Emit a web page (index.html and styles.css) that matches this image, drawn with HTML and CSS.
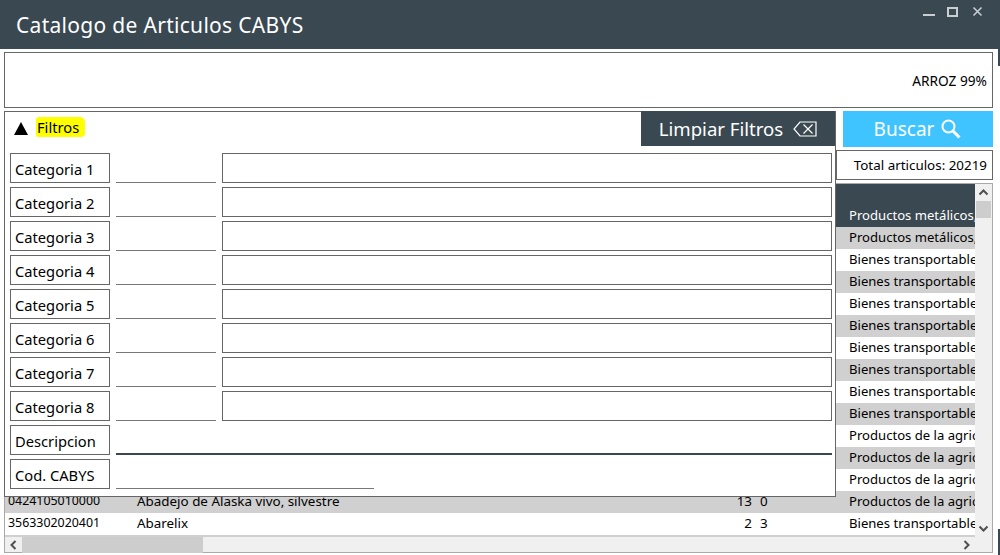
FILE: index.html
```html
<!DOCTYPE html>
<html lang="es">
<head>
    <meta charset="UTF-8">
    <title>Catalogo de Articulos CABYS</title>
    <link rel="stylesheet" href="styles.css">
</head>
<body>
    <header class="title-bar">
        <h1>Catalogo de Articulos CABYS</h1>
        <div class="window-buttons">
            <svg width="64" height="14" viewBox="0 0 64 14">
                <path d="M0 10h12" stroke="#c8ced2" stroke-width="2" fill="none"/>
                <rect x="25" y="3" width="9" height="8" stroke="#c8ced2" stroke-width="2" fill="none"/>
                <path d="M50.5 2.5l8 8M58.5 2.5l-8 8" stroke="#c8ced2" stroke-width="1.6" fill="none"/>
            </svg>
        </div>
    </header>

    <div class="search-box">ARROZ 99%</div>

    <main class="content">
        <div class="side-actions">
            <button class="search-button">Buscar
                <svg width="22" height="22" viewBox="0 0 22 22">
                    <circle cx="8.5" cy="8.5" r="6" stroke="#fff" stroke-width="2" fill="none"/>
                    <path d="M13 13l6.5 6.5" stroke="#fff" stroke-width="3" fill="none"/>
                </svg>
            </button>
            <div class="total-box">Total articulos: 20219</div>
        </div>

        <section class="grid">
            <div class="grid-body">
                <div class="grid-rows">
                    <div class="row row-head"></div>
                    <div class="row row-selected"><span class="c-code"></span><span class="c-desc"></span><span class="c-num"></span><span class="c-num2"></span><span class="c-cat">Productos metálicos, m</span></div>
                    <div class="row"><span class="c-code"></span><span class="c-desc"></span><span class="c-num"></span><span class="c-num2"></span><span class="c-cat">Productos metálicos, m</span></div>
                    <div class="row"><span class="c-code"></span><span class="c-desc"></span><span class="c-num"></span><span class="c-num2"></span><span class="c-cat">Bienes transportables</span></div>
                    <div class="row"><span class="c-code"></span><span class="c-desc"></span><span class="c-num"></span><span class="c-num2"></span><span class="c-cat">Bienes transportables</span></div>
                    <div class="row"><span class="c-code"></span><span class="c-desc"></span><span class="c-num"></span><span class="c-num2"></span><span class="c-cat">Bienes transportables</span></div>
                    <div class="row"><span class="c-code"></span><span class="c-desc"></span><span class="c-num"></span><span class="c-num2"></span><span class="c-cat">Bienes transportables</span></div>
                    <div class="row"><span class="c-code"></span><span class="c-desc"></span><span class="c-num"></span><span class="c-num2"></span><span class="c-cat">Bienes transportables</span></div>
                    <div class="row"><span class="c-code"></span><span class="c-desc"></span><span class="c-num"></span><span class="c-num2"></span><span class="c-cat">Bienes transportables</span></div>
                    <div class="row"><span class="c-code"></span><span class="c-desc"></span><span class="c-num"></span><span class="c-num2"></span><span class="c-cat">Bienes transportables</span></div>
                    <div class="row"><span class="c-code"></span><span class="c-desc"></span><span class="c-num"></span><span class="c-num2"></span><span class="c-cat">Bienes transportables</span></div>
                    <div class="row"><span class="c-code"></span><span class="c-desc"></span><span class="c-num"></span><span class="c-num2"></span><span class="c-cat">Productos de la agricultura</span></div>
                    <div class="row"><span class="c-code"></span><span class="c-desc"></span><span class="c-num"></span><span class="c-num2"></span><span class="c-cat">Productos de la agricultura</span></div>
                    <div class="row"><span class="c-code"></span><span class="c-desc"></span><span class="c-num"></span><span class="c-num2"></span><span class="c-cat">Productos de la agricultura</span></div>
                    <div class="row"><span class="c-code">0424105010000</span><span class="c-desc">Abadejo de Alaska vivo, silvestre</span><span class="c-num">13</span><span class="c-num2">0</span><span class="c-cat">Productos de la agricultura</span></div>
                    <div class="row"><span class="c-code">3563302020401</span><span class="c-desc">Abarelix</span><span class="c-num">2</span><span class="c-num2">3</span><span class="c-cat">Bienes transportables</span></div>
                    <div class="row"></div>
                </div>
                <div class="vscroll">
                    <svg width="17" height="17" viewBox="0 0 17 17"><path d="M4.5 10.5l4-4 4 4" stroke="#505050" stroke-width="2" fill="none"/></svg>
                    <div class="vthumb"></div>
                    <svg class="arrow-down" width="17" height="17" viewBox="0 0 17 17"><path d="M4.5 6.5l4 4 4-4" stroke="#505050" stroke-width="2" fill="none"/></svg>
                </div>
            </div>
            <div class="hscroll">
                <svg width="17" height="16" viewBox="0 0 17 16"><path d="M10.5 4l-4 4 4 4" stroke="#505050" stroke-width="2" fill="none"/></svg>
                <div class="hthumb"></div>
                <svg class="arrow-right" width="17" height="16" viewBox="0 0 17 16"><path d="M6.5 4l4 4-4 4" stroke="#505050" stroke-width="2" fill="none"/></svg>
                <div class="corner"></div>
            </div>
        </section>

        <section class="filter-panel">
            <div class="filter-head">
                <div class="filter-toggle">
                    <svg width="14" height="13" viewBox="0 0 14 13"><path d="M7 0l7 13H0z" fill="#000"/></svg>
                    <span class="marker">Filtros</span>
                </div>
                <button class="clear-button">Limpiar Filtros
                    <svg width="24" height="16" viewBox="0 0 24 16">
                        <path d="M7 1h16v14H7L1 8z" stroke="#fff" stroke-width="1.2" fill="none"/>
                        <path d="M10.5 3.5l9 9M19.5 3.5l-9 9" stroke="#fff" stroke-width="1.2" fill="none"/>
                    </svg>
                </button>
            </div>
            <div class="filter-row"><div class="filter-label">Categoria 1</div><div class="filter-short"></div><div class="filter-wide"></div></div>
            <div class="filter-row"><div class="filter-label">Categoria 2</div><div class="filter-short"></div><div class="filter-wide"></div></div>
            <div class="filter-row"><div class="filter-label">Categoria 3</div><div class="filter-short"></div><div class="filter-wide"></div></div>
            <div class="filter-row"><div class="filter-label">Categoria 4</div><div class="filter-short"></div><div class="filter-wide"></div></div>
            <div class="filter-row"><div class="filter-label">Categoria 5</div><div class="filter-short"></div><div class="filter-wide"></div></div>
            <div class="filter-row"><div class="filter-label">Categoria 6</div><div class="filter-short"></div><div class="filter-wide"></div></div>
            <div class="filter-row"><div class="filter-label">Categoria 7</div><div class="filter-short"></div><div class="filter-wide"></div></div>
            <div class="filter-row"><div class="filter-label">Categoria 8</div><div class="filter-short"></div><div class="filter-wide"></div></div>
            <div class="filter-row"><div class="filter-label">Descripcion</div><div class="filter-desc"></div></div>
            <div class="filter-row"><div class="filter-label">Cod. CABYS</div><div class="filter-code"></div></div>
        </section>
    </main>

    <div class="edge edge-top"></div>
    <div class="edge edge-bottom"></div>
</body>
</html>
```

FILE: styles.css
```css
html, body {
    height: 555px;
}
body {
    margin: 0;
    overflow: hidden;
    background-color: #fff;
    font-family: "Noto Sans", "Open Sans", sans-serif;
    font-size: 13.4px;
    color: #000;
    position: relative;
}
button {
    font-family: inherit;
    border: none;
    color: #fff;
    display: flex;
    align-items: center;
    justify-content: center;
    padding: 0;
}

/* title bar */
.title-bar {
    height: 49px;
    background-color: #3a4851;
    display: flex;
    justify-content: space-between;
    box-sizing: border-box;
    padding-left: 16px;
}
.title-bar h1 {
    margin: 0;
    font-size: 21px;
    font-weight: 400;
    color: #fff;
    line-height: 50px;
    letter-spacing: 0.3px;
}
.window-buttons {
    padding: 5px 13px 0 0;
}

/* search text */
.search-box {
    margin: 3px 7px 0 4px;
    height: 56px;
    box-sizing: border-box;
    border: 1px solid #666;
    background-color: #fff;
    display: flex;
    align-items: center;
    justify-content: flex-end;
    padding: 1px 5px 0 0;
    font-size: 13.7px;
}

.content {
    position: relative;
    margin-top: 3px;
    padding: 0 7px 0 4px;
}
.side-actions {
    display: flex;
    flex-direction: column;
    align-items: flex-end;
}
.search-button {
    width: 150px;
    height: 36px;
    background-color: #40c4ff;
    font-size: 19px;
    gap: 6px;
}
.total-box {
    margin-top: 3px;
    width: 157px;
    height: 30px;
    box-sizing: border-box;
    border: 1px solid #666;
    display: flex;
    align-items: center;
    justify-content: flex-end;
    padding-right: 5px;
}

/* data grid */
.grid {
    margin-top: 3px;
    height: 370px;
    box-sizing: border-box;
    border: 1px solid #aaa;
    background-color: #f0f0f0;
}
.grid-body {
    display: flex;
    height: 353px;
}
.grid-rows {
    flex: 1;
    overflow: hidden;
    background-color: #fff;
}
.row {
    display: flex;
    height: 22px;
    line-height: 20px;
    white-space: nowrap;
}
.row:nth-child(odd) {
    background-color: #d0d0d0;
}
.row-head {
    height: 21px;
    background-color: #3a4851 !important;
}
.row-selected {
    background-color: #3a4851 !important;
    color: #fff;
}
.c-code {
    width: 132px;
    padding-left: 3px;
    box-sizing: border-box;
    flex: none;
    font-size: 12.4px;
}
.c-desc {
    width: 587px;
    flex: none;
}
.c-num {
    width: 28px;
    text-align: right;
    flex: none;
}
.c-num2 {
    width: 97px;
    padding-left: 8px;
    box-sizing: border-box;
    flex: none;
}
.c-cat {
    flex: none;
    font-size: 13.1px;
}
.vscroll {
    width: 17px;
    flex: none;
    background-color: #f0f0f0;
    display: flex;
    flex-direction: column;
}
.vthumb {
    height: 17px;
    margin: 0 1px;
    background-color: #cdcdcd;
}
.arrow-down {
    margin-top: auto;
}
.hscroll {
    display: flex;
    height: 16px;
    align-items: center;
}
.hthumb {
    width: 181px;
    height: 16px;
    background-color: #cdcdcd;
}
.arrow-right {
    margin-left: auto;
}
.corner {
    width: 17px;
    flex: none;
}

/* filters over the grid */
.filter-panel {
    position: absolute;
    left: 4px;
    top: 0;
    width: 832px;
    height: 386px;
    box-sizing: border-box;
    border: 1px solid #666;
    background-color: #fff;
    padding: 0 3px 0 5px;
}
.filter-head {
    display: flex;
    justify-content: space-between;
    height: 41px;
    margin-right: -3px;
}
.filter-toggle {
    display: flex;
    align-items: flex-start;
    padding: 5px 0 0 4px;
}
.filter-toggle svg {
    margin: 5px 8px 0 0;
}
.marker {
    background-color: #ffff00;
    padding: 0 6px 0 1px;
    height: 20px;
    line-height: 20px;
    font-size: 14.7px;
    border-radius: 3px 5px 4px 2px;
}
.clear-button {
    width: 194px;
    height: 35px;
    margin-top: -1px;
    background-color: #3a4851;
    font-size: 18.6px;
    gap: 10px;
}
.filter-row {
    display: flex;
    height: 30px;
    margin-bottom: 4px;
}
.filter-label {
    width: 100px;
    box-sizing: border-box;
    border: 1px solid #666;
    padding-left: 4px;
    font-size: 14.7px;
    line-height: 30px;
    flex: none;
}
.filter-short {
    width: 100px;
    margin: 0 6px;
    border-bottom: 1px solid #777;
    box-sizing: border-box;
    flex: none;
}
.filter-wide {
    flex: 1;
    border: 1px solid #666;
}
.filter-desc {
    flex: 1;
    margin-left: 6px;
    margin-top: 1px;
    border-bottom: 2px solid #3a4851;
}
.filter-code {
    width: 258px;
    margin-left: 6px;
    border-bottom: 1px solid #777;
}

/* slivers of the window behind, at the right edge */
.edge {
    position: absolute;
    right: 0;
    width: 2px;
    background-color: #3a4851;
}
.edge-top {
    top: 49px;
    height: 17px;
}
.edge-bottom {
    top: 529px;
    height: 26px;
}
```
